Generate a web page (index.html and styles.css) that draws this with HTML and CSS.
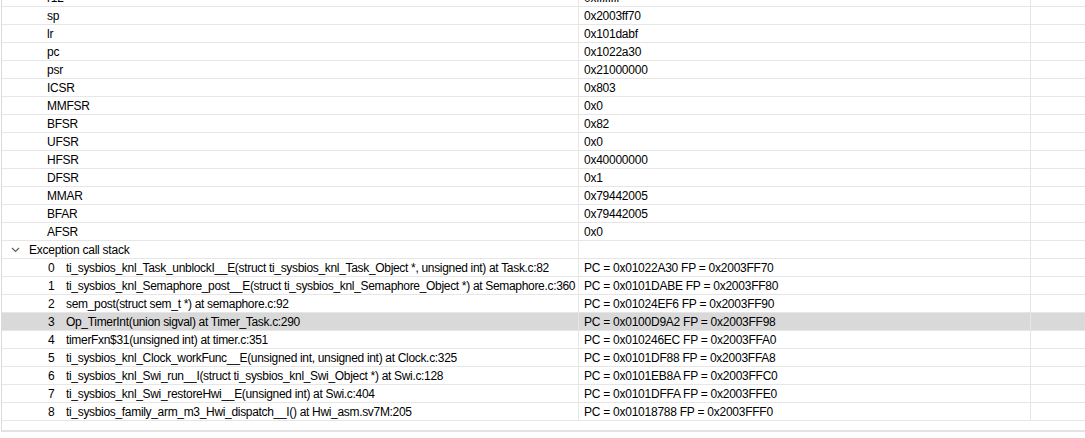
FILE: index.html
```html
<!DOCTYPE html>
<html>
<head>
<meta charset="utf-8">
<link rel="stylesheet" href="styles.css">
</head>
<body>
<div class="view">
  <div class="table">
    <div class="row reg"><div class="c1">r12</div><div class="c2">0xffffffff</div><div class="c3"></div></div>
    <div class="row reg"><div class="c1">sp</div><div class="c2">0x2003ff70</div><div class="c3"></div></div>
    <div class="row reg"><div class="c1">lr</div><div class="c2">0x101dabf</div><div class="c3"></div></div>
    <div class="row reg"><div class="c1">pc</div><div class="c2">0x1022a30</div><div class="c3"></div></div>
    <div class="row reg"><div class="c1">psr</div><div class="c2">0x21000000</div><div class="c3"></div></div>
    <div class="row reg"><div class="c1">ICSR</div><div class="c2">0x803</div><div class="c3"></div></div>
    <div class="row reg"><div class="c1">MMFSR</div><div class="c2">0x0</div><div class="c3"></div></div>
    <div class="row reg"><div class="c1">BFSR</div><div class="c2">0x82</div><div class="c3"></div></div>
    <div class="row reg"><div class="c1">UFSR</div><div class="c2">0x0</div><div class="c3"></div></div>
    <div class="row reg"><div class="c1">HFSR</div><div class="c2">0x40000000</div><div class="c3"></div></div>
    <div class="row reg"><div class="c1">DFSR</div><div class="c2">0x1</div><div class="c3"></div></div>
    <div class="row reg"><div class="c1">MMAR</div><div class="c2">0x79442005</div><div class="c3"></div></div>
    <div class="row reg"><div class="c1">BFAR</div><div class="c2">0x79442005</div><div class="c3"></div></div>
    <div class="row reg"><div class="c1">AFSR</div><div class="c2">0x0</div><div class="c3"></div></div>
    <div class="row group">
      <div class="c1"><svg class="chev" width="9" height="6" viewBox="0 0 9 6"><path d="M1 1 L4.5 4.5 L8 1" fill="none" stroke="#606060" stroke-width="1.2"/></svg><span>Exception call stack</span></div>
      <div class="c2"></div><div class="c3"></div>
    </div>
    <div class="row frame"><div class="c1"><span class="idx">0</span><span>ti_sysbios_knl_Task_unblockI__E(struct ti_sysbios_knl_Task_Object *, unsigned int) at Task.c:82</span></div><div class="c2">PC = 0x01022A30 FP = 0x2003FF70</div><div class="c3"></div></div>
    <div class="row frame"><div class="c1"><span class="idx">1</span><span>ti_sysbios_knl_Semaphore_post__E(struct ti_sysbios_knl_Semaphore_Object *) at Semaphore.c:360</span></div><div class="c2">PC = 0x0101DABE FP = 0x2003FF80</div><div class="c3"></div></div>
    <div class="row frame"><div class="c1"><span class="idx">2</span><span>sem_post(struct sem_t *) at semaphore.c:92</span></div><div class="c2">PC = 0x01024EF6 FP = 0x2003FF90</div><div class="c3"></div></div>
    <div class="row frame selected"><div class="c1"><span class="idx">3</span><span>Op_TimerInt(union sigval) at Timer_Task.c:290</span></div><div class="c2">PC = 0x0100D9A2 FP = 0x2003FF98</div><div class="c3"></div></div>
    <div class="row frame"><div class="c1"><span class="idx">4</span><span>timerFxn$31(unsigned int) at timer.c:351</span></div><div class="c2">PC = 0x010246EC FP = 0x2003FFA0</div><div class="c3"></div></div>
    <div class="row frame"><div class="c1"><span class="idx">5</span><span>ti_sysbios_knl_Clock_workFunc__E(unsigned int, unsigned int) at Clock.c:325</span></div><div class="c2">PC = 0x0101DF88 FP = 0x2003FFA8</div><div class="c3"></div></div>
    <div class="row frame"><div class="c1"><span class="idx">6</span><span>ti_sysbios_knl_Swi_run__I(struct ti_sysbios_knl_Swi_Object *) at Swi.c:128</span></div><div class="c2">PC = 0x0101EB8A FP = 0x2003FFC0</div><div class="c3"></div></div>
    <div class="row frame"><div class="c1"><span class="idx">7</span><span>ti_sysbios_knl_Swi_restoreHwi__E(unsigned int) at Swi.c:404</span></div><div class="c2">PC = 0x0101DFFA FP = 0x2003FFE0</div><div class="c3"></div></div>
    <div class="row frame"><div class="c1"><span class="idx">8</span><span>ti_sysbios_family_arm_m3_Hwi_dispatch__I() at Hwi_asm.sv7M:205</span></div><div class="c2">PC = 0x01018788 FP = 0x2003FFF0</div><div class="c3"></div></div>
    <div class="row filler"><div class="c1"></div><div class="c2"></div><div class="c3"></div></div>
  </div>
</div>
</body>
</html>
```

FILE: styles.css
```css
html, body {
  margin: 0;
  padding: 0;
  background: #ffffff;
}

body {
  width: 1085px;
  height: 438px;
  overflow: hidden;
  font-family: "Liberation Sans", Arial, sans-serif;
  font-size: 12px;
  letter-spacing: -0.25px;
  color: #000000;
}

.view {
  margin-left: 1px;
  height: 432px;
  border-left: 1px solid #dcdcdc;
  border-bottom: 2px solid #e3e3e3;
  box-sizing: border-box;
  overflow: hidden;
}

.table {
  display: flex;
  flex-direction: column;
  height: 100%;
  margin-top: -11px;
}

.row {
  display: flex;
  height: 18px;
  flex: none;
  box-sizing: border-box;
  border-bottom: 1px solid #e6e6e6;
}

.row > div {
  display: flex;
  align-items: center;
  white-space: nowrap;
  overflow: hidden;
  box-sizing: border-box;
}

.c1 {
  width: 577px;
  flex: none;
  border-right: 1px solid #e6e6e6;
}

.c2 {
  width: 452px;
  flex: none;
  border-right: 1px solid #e6e6e6;
  padding-left: 5px;
}

.c3 {
  flex: 1;
}

.reg .c1 {
  padding-left: 45px;
}

.group .c1 {
  padding-left: 9px;
}

.chev {
  flex: none;
  margin-right: 9px;
  margin-top: 1px;
}

.frame .c1 {
  padding-left: 46px;
  letter-spacing: -0.32px;
}

.idx {
  display: inline-block;
  flex: none;
  width: 18px;
}

.selected {
  background: #d9d9d9;
}

.filler {
  flex: 1;
  border-bottom: none;
}
```
